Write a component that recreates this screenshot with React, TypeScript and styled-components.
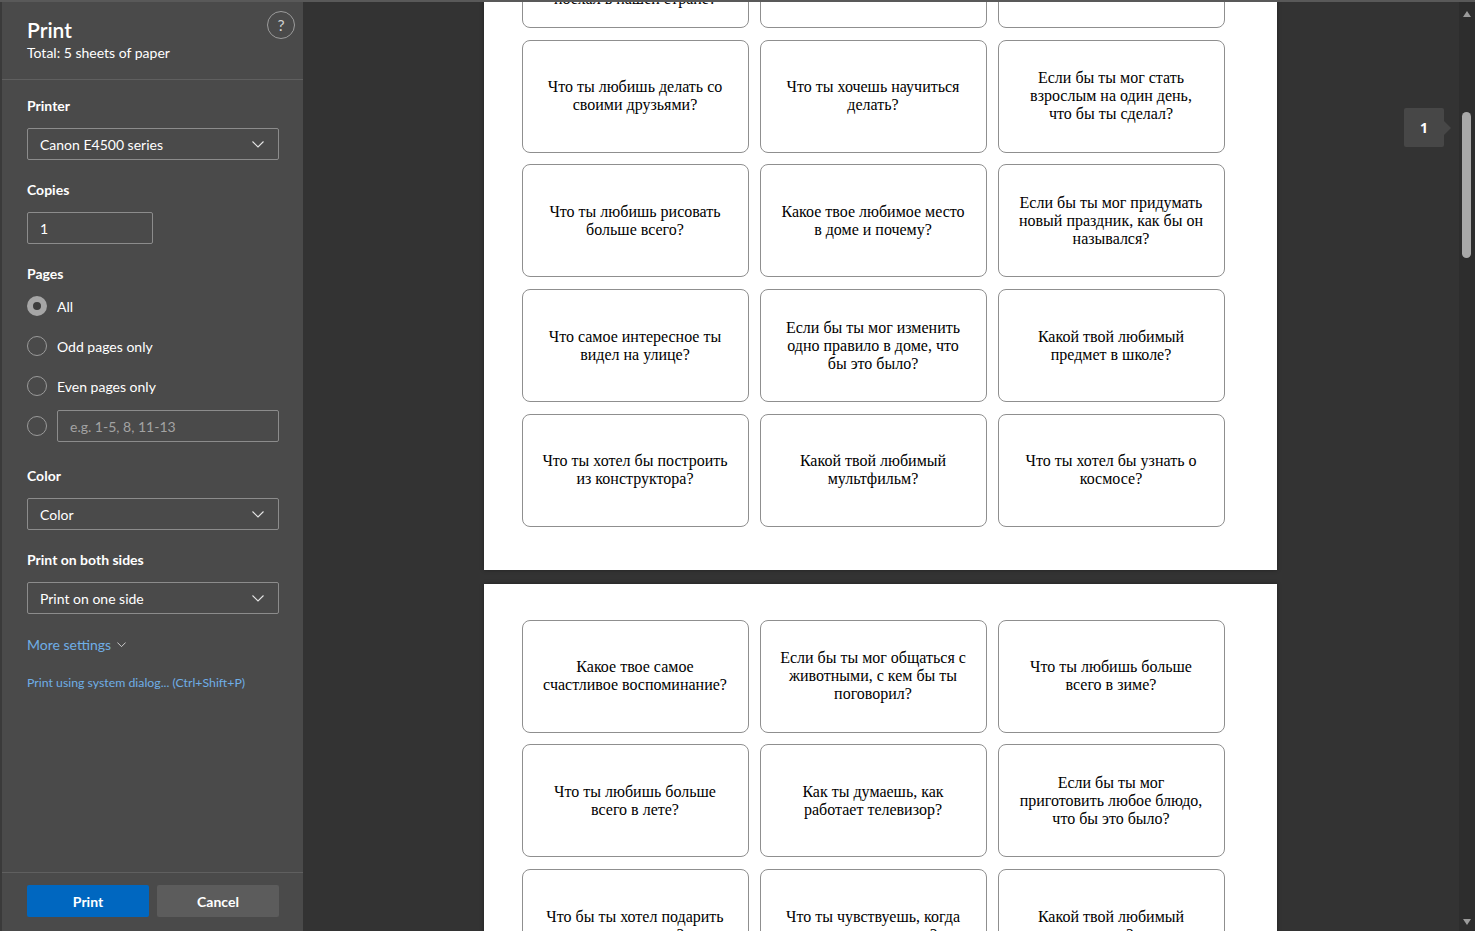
import React, { useLayoutEffect, useRef } from 'react'
import styled, { createGlobalStyle } from 'styled-components'

const GlobalStyle = createGlobalStyle`
  html, body {
    margin: 0;
    padding: 0;
    height: 100%;
    background: #333333;
    overflow: hidden;
  }
  #root {
    height: 100%;
  }
`

const Shell = styled.div`
  display: flex;
  height: 931px;
  box-sizing: border-box;
  border-top: 2px solid #595959;
  background: #333333;
  font-family: Lato, "Noto Sans", sans-serif;
`

const Sidebar = styled.aside`
  width: 303px;
  flex-shrink: 0;
  display: flex;
  flex-direction: column;
  box-sizing: border-box;
  background: #4a4a4a;
  border-left: 2px solid #3a3a3a;
  color: #ffffff;
`

const Header = styled.header`
  display: flex;
  justify-content: space-between;
  align-items: flex-start;
  padding: 15px 8px 16px 25px;
  border-bottom: 1px solid #5f5f5f;
`

const Title = styled.h1`
  margin: 0;
  font-size: 21px;
  line-height: 26px;
  font-weight: 600;
`

const Subtitle = styled.div`
  font-size: 14px;
  line-height: 20px;
`

const HelpButton = styled.button`
  width: 28px;
  height: 28px;
  margin-top: -6px;
  border-radius: 50%;
  border: 1px solid #9c9c9c;
  background: transparent;
  color: #d0d0d0;
  font-family: inherit;
  font-size: 16px;
  line-height: 1;
  padding: 0;
`

const Settings = styled.div`
  flex: 1;
  padding: 16px 24px 0 25px;
`

const Section = styled.section<{ $gap?: number }>`
  margin-bottom: ${({ $gap }) => $gap ?? 20}px;
`

const Label = styled.div`
  font-size: 14px;
  line-height: 20px;
  font-weight: 700;
  margin-bottom: 12px;
`

const Field = styled.div<{ $width?: number }>`
  display: flex;
  align-items: center;
  justify-content: space-between;
  box-sizing: border-box;
  width: ${({ $width }) => ($width ? `${$width}px` : '100%')};
  height: 32px;
  padding: 0 14px 0 12px;
  border: 1px solid #8c8c8c;
  border-radius: 2px;
  font-size: 14px;
  color: #ffffff;
`

const Placeholder = styled.span`
  color: #a3a3a3;
`

const RadioList = styled.div`
  display: flex;
  flex-direction: column;
  gap: 8px;
  margin-top: -6px;
`

const RadioRow = styled.label`
  display: flex;
  align-items: center;
  gap: 10px;
  height: 32px;
  font-size: 14px;
`

const RadioDot = styled.span<{ $checked?: boolean }>`
  width: 20px;
  height: 20px;
  flex-shrink: 0;
  box-sizing: border-box;
  border-radius: 50%;
  border: ${({ $checked }) => ($checked ? '6px solid #a6a6a6' : '1px solid #9a9a9a')};
  background: ${({ $checked }) => ($checked ? '#3c3c3c' : 'transparent')};
`

const RangeField = styled(Field)`
  flex: 1;
`

const Link = styled.a<{ $small?: boolean }>`
  display: inline-flex;
  align-items: center;
  gap: 6px;
  color: #6faee6;
  font-size: ${({ $small }) => ($small ? 12.3 : 14)}px;
  line-height: 20px;
  text-decoration: none;
`

const Footer = styled.footer`
  display: flex;
  gap: 8px;
  padding: 12px 24px 14px 25px;
  border-top: 1px solid #5f5f5f;
`

const Button = styled.button<{ $primary?: boolean }>`
  width: 122px;
  height: 32px;
  border: none;
  border-radius: 2px;
  background: ${({ $primary }) => ($primary ? '#0067c0' : '#5c5c5c')};
  color: #ffffff;
  font-family: inherit;
  font-size: 14px;
  font-weight: 700;
`

const Preview = styled.main`
  flex: 1;
  position: relative;
  display: flex;
  overflow: hidden;
`

const Scroller = styled.div`
  flex: 1;
  overflow: hidden;
`

const PageList = styled.div`
  display: flex;
  flex-direction: column;
  align-items: center;
  gap: 14px;
  padding: 0 2px 40px 0;
`

const Sheet = styled.div<{ $bottom: number }>`
  width: 793px;
  box-sizing: border-box;
  padding: 36px 0 ${({ $bottom }) => $bottom}px 38px;
  background: #ffffff;
  box-shadow: 0 0 4px rgba(0, 0, 0, 0.35);
`

const CardGrid = styled.div`
  display: grid;
  grid-template-columns: repeat(3, 227px);
  grid-auto-rows: 113px;
  column-gap: 11px;
  row-gap: 11.7px;
`

const Card = styled.div`
  display: flex;
  align-items: center;
  justify-content: center;
  box-sizing: border-box;
  padding: 0 19px;
  border: 1px solid #8f8f8f;
  border-radius: 8px;
  text-align: center;
  font-family: "Liberation Serif", "Times New Roman", serif;
  font-size: 16px;
  line-height: 18px;
  color: #000000;
`

const PageBadge = styled.div`
  position: absolute;
  top: 106px;
  right: 31px;
  width: 40px;
  height: 39px;
  display: flex;
  align-items: center;
  justify-content: center;
  background: #474747;
  border-radius: 2px;
  color: #ffffff;
  font-family: "Noto Sans", sans-serif;
  font-size: 14px;
  font-weight: 700;

  &::after {
    content: '';
    position: absolute;
    right: -7px;
    top: 50%;
    margin-top: -7px;
    border-left: 7px solid #474747;
    border-top: 7px solid transparent;
    border-bottom: 7px solid transparent;
  }
`

const ScrollTrack = styled.div`
  position: relative;
  width: 16px;
  flex-shrink: 0;
  background: #2d2d2d;
`

const Arrow = styled.div<{ $down?: boolean }>`
  position: absolute;
  left: 4px;
  ${({ $down }) => ($down ? 'bottom: 6px;' : 'top: 9px;')}
  width: 0;
  height: 0;
  border-left: 4.5px solid transparent;
  border-right: 4.5px solid transparent;
  ${({ $down }) => ($down ? 'border-top: 6px solid #9b9b9b;' : 'border-bottom: 6px solid #9b9b9b;')}
`

const Thumb = styled.div`
  position: absolute;
  left: 3px;
  width: 9px;
  border-radius: 5px;
  background: #a8a8a8;
`

const Chevron = ({ size = 12 }: { size?: number }) => (
	<svg width={size} height={size / 2 + 1} viewBox="0 0 12 7" fill="none">
		<path d="M0.5 0.5 L6 6 L11.5 0.5" stroke="#e6e6e6" strokeWidth="1.1" />
	</svg>
)

const pageOne = [
	'Если бы ты мог отправиться в путешествие, куда бы ты поехал в нашей стране?',
	'Что ты любишь есть на завтрак?',
	'Какая твоя любимая игра?',
	'Что ты любишь делать со своими друзьями?',
	'Что ты хочешь научиться делать?',
	'Если бы ты мог стать взрослым на один день, что бы ты сделал?',
	'Что ты любишь рисовать больше всего?',
	'Какое твое любимое место в доме и почему?',
	'Если бы ты мог придумать новый праздник, как бы он назывался?',
	'Что самое интересное ты видел на улице?',
	'Если бы ты мог изменить одно правило в доме, что бы это было?',
	'Какой твой любимый предмет в школе?',
	'Что ты хотел бы построить из конструктора?',
	'Какой твой любимый мультфильм?',
	'Что ты хотел бы узнать о космосе?',
]

const pageTwo = [
	'Какое твое самое счастливое воспоминание?',
	'Если бы ты мог общаться с животными, с кем бы ты поговорил?',
	'Что ты любишь больше всего в зиме?',
	'Что ты любишь больше всего в лете?',
	'Как ты думаешь, как работает телевизор?',
	'Если бы ты мог приготовить любое блюдо, что бы это было?',
	'Что бы ты хотел подарить своему другу?',
	'Что ты чувствуешь, когда слышишь музыку?',
	'Какой твой любимый сезон?',
	'Что ты любишь делать в выходные?',
	'Какая твоя любимая книга?',
	'Что тебя больше всего смешит?',
]

const App: React.FC = () => {
	const scrollRef = useRef<HTMLDivElement>(null)

	useLayoutEffect(() => {
		if (scrollRef.current) scrollRef.current.scrollTop = 123
	}, [])

	return (
		<>
			<GlobalStyle />
			<Shell>
				<Sidebar>
					<Header>
						<div>
							<Title>Print</Title>
							<Subtitle>Total: 5 sheets of paper</Subtitle>
						</div>
						<HelpButton>?</HelpButton>
					</Header>

					<Settings>
						<Section>
							<Label>Printer</Label>
							<Field>
								Canon E4500 series
								<Chevron />
							</Field>
						</Section>
						<Section>
							<Label>Copies</Label>
							<Field $width={126}>1</Field>
						</Section>
						<Section $gap={24}>
							<Label>Pages</Label>
							<RadioList>
								<RadioRow><RadioDot $checked />All</RadioRow>
								<RadioRow><RadioDot />Odd pages only</RadioRow>
								<RadioRow><RadioDot />Even pages only</RadioRow>
								<RadioRow>
									<RadioDot />
									<RangeField><Placeholder>e.g. 1-5, 8, 11-13</Placeholder></RangeField>
								</RadioRow>
							</RadioList>
						</Section>
						<Section>
							<Label>Color</Label>
							<Field>
								Color
								<Chevron />
							</Field>
						</Section>
						<Section>
							<Label>Print on both sides</Label>
							<Field>
								Print on one side
								<Chevron />
							</Field>
						</Section>
						<Section $gap={16}>
							<Link href="#">More settings <Chevron size={9} /></Link>
						</Section>
						<Link href="#" $small>Print using system dialog... (Ctrl+Shift+P)</Link>
					</Settings>

					<Footer>
						<Button $primary>Print</Button>
						<Button>Cancel</Button>
					</Footer>
				</Sidebar>

				<Preview>
					<Scroller ref={scrollRef}>
						<PageList>
							<Sheet $bottom={43}>
								<CardGrid>
									{pageOne.map((q, i) => <Card key={i}>{q}</Card>)}
								</CardGrid>
							</Sheet>
							<Sheet $bottom={43}>
								<CardGrid>
									{pageTwo.map((q, i) => <Card key={i}>{q}</Card>)}
								</CardGrid>
							</Sheet>
						</PageList>
					</Scroller>
					<PageBadge>1</PageBadge>
					<ScrollTrack>
						<Arrow />
						<Thumb style={{ top: 110, height: 146 }} />
						<Arrow $down />
					</ScrollTrack>
				</Preview>
			</Shell>
		</>
	)
}

export default App
